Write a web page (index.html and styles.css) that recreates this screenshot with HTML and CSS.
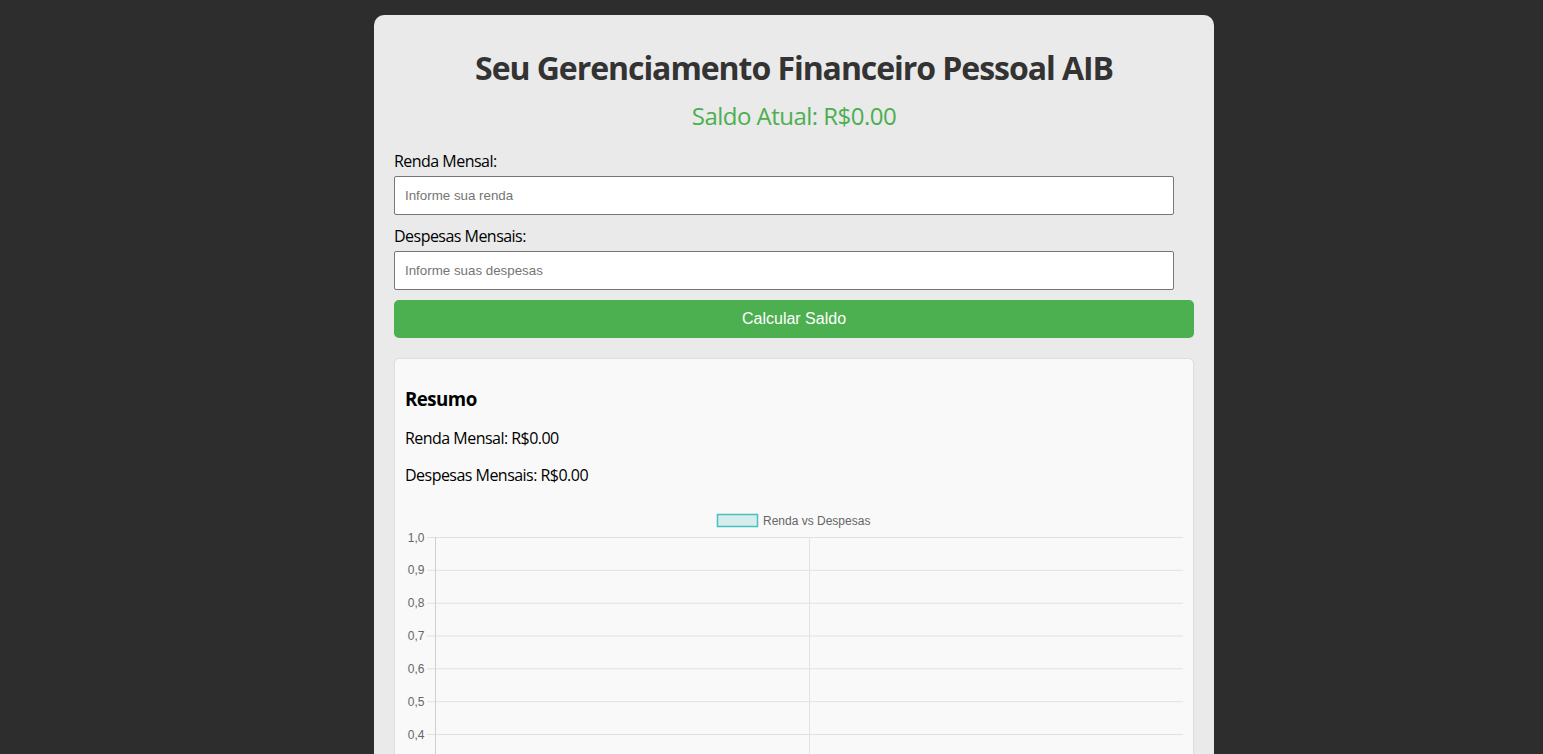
FILE: index.html
```html
<!DOCTYPE html>
<html lang="pt-BR">
<head>
<meta charset="utf-8">
<title>Seu Gerenciamento Financeiro Pessoal AIB</title>
<link rel="stylesheet" href="styles.css">
</head>
<body>
<div class="container">
  <h1 class="title">Seu Gerenciamento Financeiro Pessoal AIB</h1>
  <div class="balance">Saldo Atual: R$0.00</div>
  <label class="field-label" for="renda">Renda Mensal:</label>
  <input class="field" id="renda" type="number" placeholder="Informe sua renda">
  <label class="field-label second" for="despesas">Despesas Mensais:</label>
  <input class="field" id="despesas" type="number" placeholder="Informe suas despesas">
  <button class="calc-btn" type="button">Calcular Saldo</button>
  <div class="summary">
    <h3 class="summary-title">Resumo</h3>
    <p class="summary-line">Renda Mensal: R$0.00</p>
    <p class="summary-line">Despesas Mensais: R$0.00</p>
    <div class="chart">
      <svg width="778" height="400" viewBox="0 0 778 400" xmlns="http://www.w3.org/2000/svg">
        <rect x="312.5" y="9.5" width="40" height="12" fill="rgba(75,192,192,0.2)" stroke="rgb(75,192,192)" stroke-width="1.5"/>
        <text x="358" y="19.5" class="legend-text">Renda vs Despesas</text>
        <g stroke="#e2e2e2" stroke-width="1">
          <line x1="22" y1="32.5" x2="778" y2="32.5"/>
          <line x1="22" y1="65.3" x2="778" y2="65.3"/>
          <line x1="22" y1="98.2" x2="778" y2="98.2"/>
          <line x1="22" y1="131" x2="778" y2="131"/>
          <line x1="22" y1="163.8" x2="778" y2="163.8"/>
          <line x1="22" y1="196.7" x2="778" y2="196.7"/>
          <line x1="22" y1="229.5" x2="778" y2="229.5"/>
          <line x1="22" y1="262.3" x2="778" y2="262.3"/>
          <line x1="22" y1="295.2" x2="778" y2="295.2"/>
          <line x1="22" y1="328" x2="778" y2="328"/>
          <line x1="22" y1="360.8" x2="778" y2="360.8"/>
          <line x1="404.5" y1="32" x2="404.5" y2="361"/>
        </g>
        <line x1="30.5" y1="32" x2="30.5" y2="368" stroke="#d0d0d0" stroke-width="1"/>
        <g class="tick-text" text-anchor="end">
          <text x="19.5" y="36.5">1,0</text>
          <text x="19.5" y="69.3">0,9</text>
          <text x="19.5" y="102.2">0,8</text>
          <text x="19.5" y="135">0,7</text>
          <text x="19.5" y="167.8">0,6</text>
          <text x="19.5" y="200.7">0,5</text>
          <text x="19.5" y="233.5">0,4</text>
          <text x="19.5" y="266.3">0,3</text>
          <text x="19.5" y="299.2">0,2</text>
          <text x="19.5" y="332">0,1</text>
          <text x="19.5" y="364.8">0</text>
        </g>
      </svg>
    </div>
  </div>
</div>
</body>
</html>
```
FILE: styles.css
```css
html, body {
  margin: 0;
  padding: 0;
}
body {
  background: #2d2d2d;
  font-family: "Open Sans", "Noto Sans", sans-serif;
  letter-spacing: -0.033em;
  color: #000;
  padding-top: 15px;
  padding-left: 45px;
  height: 754px;
  overflow: hidden;
}
.container {
  width: 800px;
  margin: 0 auto;
  background: #eaeaea;
  border-radius: 10px;
  padding: 20px;
  display: flex;
  flex-direction: column;
}
.title {
  margin: 12px 0 0;
  font-size: 32px;
  line-height: 42px;
  letter-spacing: -0.033em;
  font-weight: 700;
  color: #333;
  text-align: center;
}
.balance {
  margin-top: 12px;
  font-size: 24px;
  line-height: 30px;
  color: #4caf50;
  text-align: center;
}
.field-label {
  margin-top: 19px;
  font-size: 16px;
  line-height: 22px;
}
.field-label.second {
  margin-top: 10px;
}
.field {
  margin-top: 4px;
  box-sizing: border-box;
  width: 780px;
  height: 39px;
  padding: 0 10px;
  border: 1px solid #767676;
  border-radius: 2px;
  background: #fff;
  font-family: "Liberation Sans", Arial, sans-serif;
  letter-spacing: 0;
  font-size: 13.33px;
  color: #000;
  outline: none;
}
.field::placeholder {
  color: #757575;
}
.calc-btn {
  margin-top: 10px;
  width: 800px;
  height: 38px;
  border: none;
  border-radius: 5px;
  background: #4caf50;
  color: #fff;
  font-family: "Liberation Sans", Arial, sans-serif;
  letter-spacing: 0;
  font-size: 16px;
  cursor: pointer;
}
.summary {
  margin-top: 20px;
  background: #f9f9f9;
  border: 1px solid #ddd;
  border-radius: 5px;
  padding: 10px;
}
.summary-title {
  margin: 17px 0 0;
  font-size: 18.7px;
  line-height: 25px;
  font-weight: 700;
}
.summary-line {
  margin: 15px 0 0;
  font-size: 16px;
  line-height: 22px;
}
.summary-title + .summary-line {
  margin-top: 16px;
}
.chart {
  margin-top: 19px;
  height: 400px;
  letter-spacing: 0;
}
.chart svg {
  display: block;
}
.legend-text {
  font-family: "Liberation Sans", Arial, sans-serif;
  font-size: 12px;
  fill: #666;
}
.tick-text {
  font-family: "Liberation Sans", Arial, sans-serif;
  font-size: 12px;
  fill: #666;
}
```
